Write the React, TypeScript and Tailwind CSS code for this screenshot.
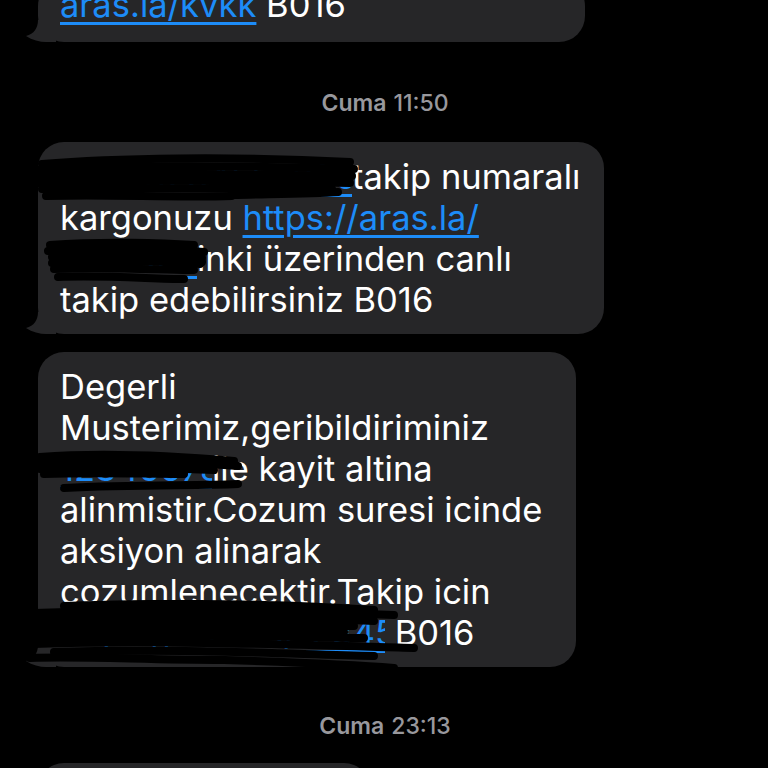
import React from "react";

const font = { fontFamily: "Inter, 'Noto Sans', 'Liberation Sans', sans-serif" };

// black marker strokes drawn over redacted links
const Scribble: React.FC<{ width: number; height: number; paths: string[]; className: string }> = (props) => {
  return (
    <svg
      className={`absolute pointer-events-none ${props.className}`}
      width={props.width}
      height={props.height}
      viewBox={`0 0 ${props.width} ${props.height}`}
      fill="none"
    >
      {props.paths.map((d, i) => (
        <path key={i} d={d} stroke="#000" strokeWidth={8} strokeLinecap="round" strokeLinejoin="round" />
      ))}
    </svg>
  );
};

const Redacted: React.FC<{
  width: number;
  text: string;
  scribble: { width: number; height: number; paths: string[]; className: string };
}> = (props) => {
  return (
    <span className="relative inline-block align-top" style={{ width: props.width }}>
      <span className="text-[#1d8cf8] underline underline-offset-[5px] decoration-[3px] whitespace-nowrap overflow-hidden block">
        {props.text}
      </span>
      <Scribble {...props.scribble} />
    </span>
  );
};

const Tail: React.FC = () => (
  <svg className="absolute -left-[12px] bottom-0" width="30" height="22" viewBox="0 0 30 22">
    <path d="M30 0 L30 22 L20 22 C14 22 6 20 0 16 C8 14 12 8 12 0 Z" fill="#262628" />
  </svg>
);

const Bubble: React.FC<{ width: number; className?: string; children: React.ReactNode; tail?: boolean }> = (props) => (
  <div
    className={`relative ml-[38px] rounded-[26px] bg-[#262628] px-[22px] text-[34.5px] leading-[41px] text-white ${props.className ?? ""}`}
    style={{ width: props.width }}
  >
    {props.tail !== false && <Tail />}
    <div className="relative">{props.children}</div>
  </div>
);

const Stamp: React.FC<{ day: string; time: string }> = (props) => (
  <div className="flex justify-center pl-[2px] text-[23px] leading-[26px] text-[#98989d]">
    <span className="font-semibold">{props.day}</span>
    <span className="ml-[7px] font-medium">{props.time}</span>
  </div>
);

const Link: React.FC<{ children: React.ReactNode }> = (props) => (
  <span className="text-[#1d8cf8] underline underline-offset-[5px] decoration-[3px]">{props.children}</span>
);

export default function App() {
  return (
    <div className="w-[768px] h-[768px] overflow-hidden bg-black" style={font}>
      <div className="flex flex-col">
        <Bubble width={547} className="-mt-[20px] pt-[4px] pb-[17px]">
          <div>
            <Link>aras.la/kvkk</Link> B016
          </div>
        </Bubble>

        <div className="mt-[48px] mb-[26px]">
          <Stamp day="Cuma" time="11:50" />
        </div>

        <Bubble width={566} className="py-[14px]">
          <div className="whitespace-nowrap">
            <Redacted
              width={292}
              text="ARAS1234567890"
              scribble={{
                width: 330,
                height: 50,
                className: "-left-[28px] -top-[4px]",
                paths: [
                  "M10 12 C80 6 200 4 318 10",
                  "M4 18 C90 13 220 14 322 17",
                  "M6 24 C100 20 200 22 320 24",
                  "M6 31 C100 27 210 29 318 31",
                  "M10 37 C120 34 220 38 300 37",
                  "M20 20 C100 26 220 22 310 28",
                  "M14 44 C80 42 140 46 200 44",
                  "M200 43 C240 42 280 42 306 40",
                ],
              }}
            />
            takip numaralı
          </div>
          <div className="whitespace-nowrap">
            kargonuzu <Link>https://aras.la/</Link>
          </div>
          <div className="whitespace-nowrap">
            <Redacted
              width={137}
              text="ABCDEFG"
              scribble={{
                width: 172,
                height: 52,
                className: "-left-[16px] -top-[2px]",
                paths: [
                  "M6 9 C60 5 120 7 150 9",
                  "M4 15 C60 11 120 13 160 16",
                  "M8 21 C70 18 130 20 158 22",
                  "M8 27 C70 24 130 26 156 28",
                  "M10 33 C70 30 130 35 150 34",
                  "M14 41 C60 39 110 43 140 43",
                  "M20 19 C80 25 130 21 158 26",
                ],
              }}
            />
            inki üzerinden canlı
          </div>
          <div className="whitespace-nowrap">takip edebilirsiniz B016</div>
        </Bubble>

        <div className="h-[18px]" />

        <Bubble width={538} className="py-[14px]">
          <div>Degerli</div>
          <div>Musterimiz,geribildiriminiz</div>
          <div className="whitespace-nowrap">
            <Redacted
              width={152}
              text="12345678"
              scribble={{
                width: 210,
                height: 44,
                className: "-left-[26px] top-[2px]",
                paths: [
                  "M6 7 C60 3 130 5 200 11",
                  "M4 13 C70 9 140 11 204 16",
                  "M6 19 C60 16 120 18 180 20",
                  "M10 24 C60 22 110 24 150 24",
                  "M30 38 C100 34 160 36 204 34",
                ],
              }}
            />
            ile kayit altina
          </div>
          <div>alinmistir.Cozum suresi icinde</div>
          <div>aksiyon alinarak</div>
          <div className="whitespace-nowrap">cozumlenecektir.Takip icin</div>
          <div className="whitespace-nowrap">
            <Redacted
              width={325}
              text="https://aras.la/12345678"
              scribble={{
                width: 400,
                height: 72,
                className: "-left-[36px] -top-[12px]",
                paths: [
                  "M40 6 C140 2 260 4 350 10",
                  "M10 13 C120 9 260 11 370 15",
                  "M6 19 C120 15 260 17 350 21",
                  "M4 25 C120 21 240 25 330 26",
                  "M6 31 C120 28 240 31 320 32",
                  "M8 37 C130 33 250 37 340 38",
                  "M10 44 C120 40 250 44 390 48",
                  "M30 52 C150 48 260 54 350 56",
                  "M6 58 C60 56 120 60 200 60",
                  "M200 60 C260 62 320 64 370 68",
                ],
              }}
            />
            {" "}B016
          </div>
        </Bubble>

        <div className="mt-[46px] mb-[24px]">
          <Stamp day="Cuma" time="23:13" />
        </div>

        <Bubble width={332} className="h-[60px]" tail={false}>
          <div />
        </Bubble>
      </div>
    </div>
  );
}
